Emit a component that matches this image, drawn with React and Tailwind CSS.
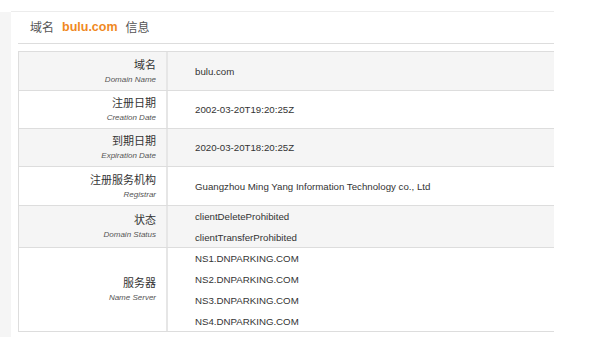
export default function App() {
  const font = { fontFamily: '"Liberation Sans", Arial, "Noto Sans CJK SC", sans-serif' };
  const rows = [
    { zh: "域名", en: "Domain Name", vals: ["bulu.com"], gray: true, h: "h-[39px]" },
    { zh: "注册日期", en: "Creation Date", vals: ["2002-03-20T19:20:25Z"], gray: false, h: "h-[38px]" },
    { zh: "到期日期", en: "Expiration Date", vals: ["2020-03-20T18:20:25Z"], gray: true, h: "h-[38px]" },
    { zh: "注册服务机构", en: "Registrar", vals: ["Guangzhou Ming Yang Information Technology co., Ltd"], gray: false, h: "h-[39px]" },
    { zh: "状态", en: "Domain Status", vals: ["clientDeleteProhibited", "clientTransferProhibited"], gray: true, h: "h-[42px]" },
    { zh: "服务器", en: "Name Server", vals: ["NS1.DNPARKING.COM", "NS2.DNPARKING.COM", "NS3.DNPARKING.COM", "NS4.DNPARKING.COM"], gray: false, h: "h-[84px]" },
  ];
  return (
    <div className="w-[594px] h-[347px] bg-white overflow-hidden" style={font}>
      <div className="flex pt-[11px]">
        <div className="w-[11px] h-[325px] mt-[1px] bg-[#f5f5f5]" />
        <div className="w-[543px] h-[325px] border-t border-[#ececec] bg-white">
          <div className="ml-[7px] h-[32px] border-b border-[#dddddd] flex items-center pl-[12px] text-[12px] text-[#555]">
            <span>域名</span>
            <span className="ml-[8px] mr-[8px] font-bold text-[12.5px] text-[#f0891f]">bulu.com</span>
            <span>信息</span>
          </div>
          <div className="ml-[7px] mt-[7px] border-t border-l border-[#dddddd]">
            {rows.map((r, i) => (
              <div key={i} className={`flex border-b border-[#dddddd] ${r.h} ${r.gray ? "bg-[#f5f5f5]" : "bg-white"}`}>
                <div className="w-[149px] border-r-2 border-[#e6e6e6] flex flex-col justify-center items-end pr-[10px] pt-[1px]">
                  <div className="text-[11px] leading-[16px] text-[#333]">{r.zh}</div>
                  <div className="text-[8px] leading-[14px] italic text-[#555]">{r.en}</div>
                </div>
                <div className="flex-1 flex flex-col justify-center pl-[27px] text-[9.7px] leading-[21px] text-[#333]">
                  {r.vals.map((v, j) => (
                    <div key={j}>{v}</div>
                  ))}
                </div>
              </div>
            ))}
          </div>
        </div>
      </div>
    </div>
  );
}
